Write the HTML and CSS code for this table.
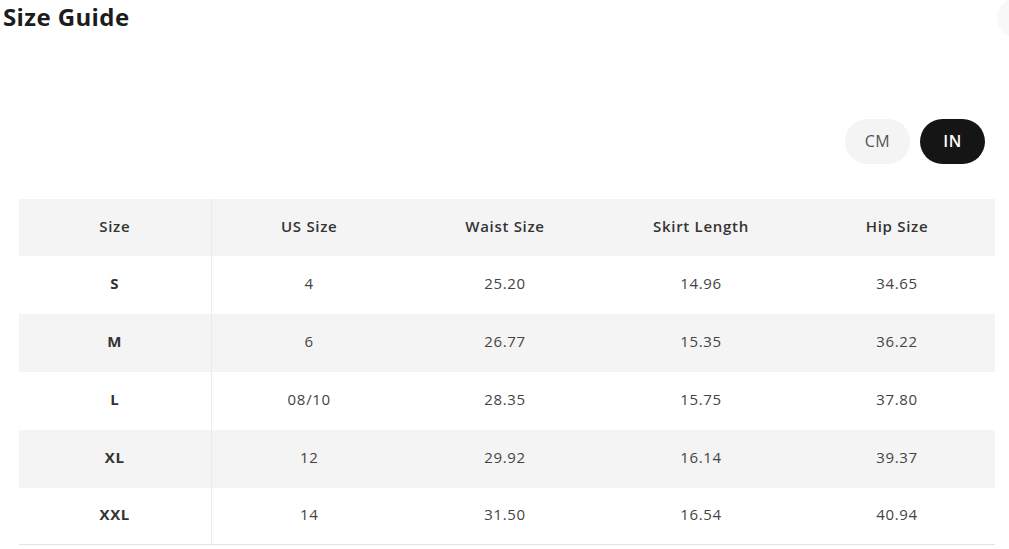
FILE: index.html
```html
<!DOCTYPE html>
<html lang="en">
<head>
<meta charset="utf-8">
<title>Size Guide</title>
<link rel="stylesheet" href="styles.css">
</head>
<body>
<div class="page">
  <h1 class="title">Size Guide</h1>
  <button class="close" aria-label="Close"></button>
  <div class="units">
    <button class="unit">CM</button>
    <button class="unit active">IN</button>
  </div>
  <table class="sizes">
    <colgroup>
      <col class="c-first"><col class="c-rest"><col class="c-rest"><col class="c-rest"><col class="c-rest">
    </colgroup>
    <thead>
      <tr><th>Size</th><th>US Size</th><th>Waist Size</th><th>Skirt Length</th><th>Hip Size</th></tr>
    </thead>
    <tbody>
      <tr><td>S</td><td>4</td><td>25.20</td><td>14.96</td><td>34.65</td></tr>
      <tr class="alt"><td>M</td><td>6</td><td>26.77</td><td>15.35</td><td>36.22</td></tr>
      <tr><td>L</td><td>08/10</td><td>28.35</td><td>15.75</td><td>37.80</td></tr>
      <tr class="alt"><td>XL</td><td>12</td><td>29.92</td><td>16.14</td><td>39.37</td></tr>
      <tr class="last"><td>XXL</td><td>14</td><td>31.50</td><td>16.54</td><td>40.94</td></tr>
    </tbody>
  </table>
</div>
</body>
</html>
```
FILE: styles.css
```css
html, body {
  margin: 0;
  padding: 0;
  background: #ffffff;
}
body {
  font-family: "Open Sans", "Liberation Sans", sans-serif;
  color: #333;
}
.page {
  position: relative;
  width: 1009px;
  height: 549px;
  overflow: hidden;
}
.title {
  margin: 0;
  padding: 1px 0 0 3px;
  height: 39px;
  font-family: "Open Sans", sans-serif;
  font-size: 24px;
  font-weight: 700;
  line-height: 32px;
  color: #1c1c1c;
  letter-spacing: 0.4px;
}
.close {
  position: absolute;
  top: -2px;
  left: 997px;
  width: 40px;
  height: 40px;
  border: none;
  border-radius: 50%;
  background: #f8f8f8;
  padding: 0;
}
.units {
  display: flex;
  justify-content: flex-end;
  gap: 10px;
  margin-top: 79px;
  padding-right: 24px;
}
.unit {
  width: 65px;
  height: 45px;
  border: none;
  border-radius: 23px;
  background: #f4f4f4;
  color: #555;
  font-family: "Open Sans", sans-serif;
  font-size: 16px;
  font-weight: 500;
  letter-spacing: 0.5px;
  padding: 0 0 2px 0;
}
.unit.active {
  background: #151515;
  color: #fff;
  font-weight: 600;
}
.sizes {
  margin: 35px 0 0 19px;
  width: 975px;
  border-collapse: collapse;
  table-layout: fixed;
}
.c-first { width: 192px; }
.c-rest { width: 196px; }
.sizes th, .sizes td {
  padding: 0 0 4px 0;
  text-align: center;
  font-size: 15px;
  letter-spacing: 0.7px;
}
.sizes th {
  height: 53px;
  background: #f4f4f4;
  font-weight: 600;
  color: #333;
}
.sizes td {
  height: 54px;
  color: #444;
}
.sizes th:first-child, .sizes td:first-child {
  border-right: 1px solid #ebebeb;
}
.sizes td:first-child {
  font-weight: 700;
  color: #333;
}
.sizes tr.alt td {
  background: #f4f4f4;
}
.sizes tr.last td {
  height: 52px;
  border-bottom: 1px solid #e3e3e3;
}
```
